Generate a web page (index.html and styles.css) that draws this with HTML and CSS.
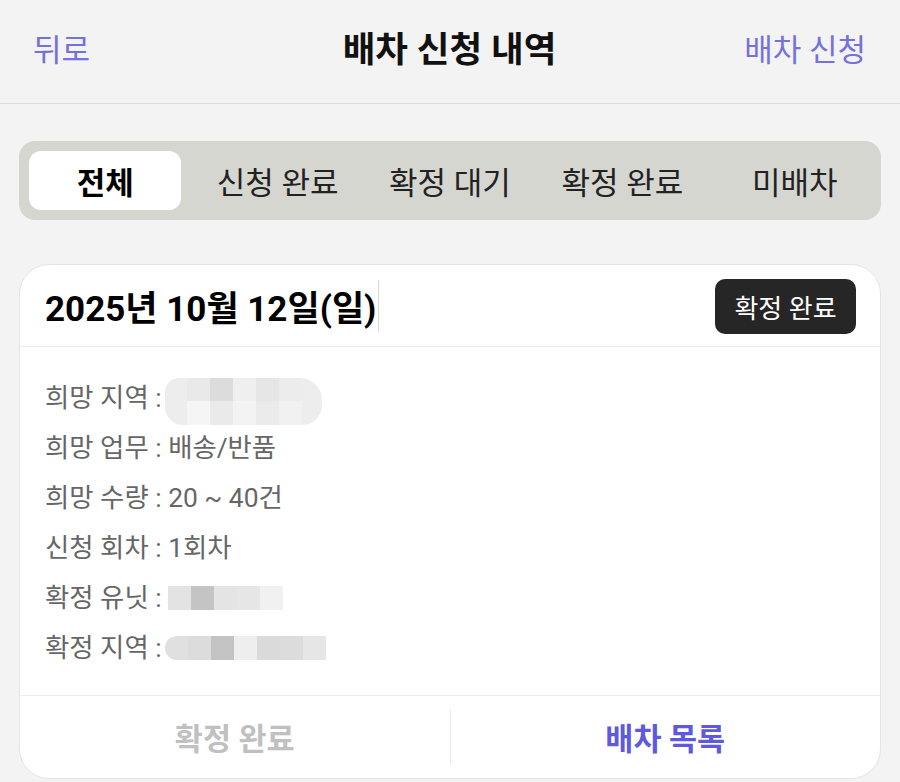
FILE: index.html
```html
<!DOCTYPE html>
<html lang="ko">
<head>
<meta charset="utf-8">
<title>배차 신청 내역</title>
<link rel="stylesheet" href="styles.css">
</head>
<body>
<header class="topbar">
  <a class="nav-link">뒤로</a>
  <h1 class="title">배차 신청 내역</h1>
  <a class="nav-link right">배차 신청</a>
</header>

<main class="content">
  <nav class="tabs">
    <div class="tab"><span class="tab-pill active">전체</span></div>
    <div class="tab"><span class="tab-pill">신청 완료</span></div>
    <div class="tab"><span class="tab-pill">확정 대기</span></div>
    <div class="tab"><span class="tab-pill">확정 완료</span></div>
    <div class="tab"><span class="tab-pill">미배차</span></div>
  </nav>

  <section class="card">
    <div class="card-head">
      <div class="date">2025년 10월 12일(일)<span class="caret"></span></div>
      <span class="badge">확정 완료</span>
    </div>
    <div class="card-body">
      <div class="row">희망 지역 : <span class="mosaic m1"><i class="c1"></i><i class="c2"></i><i class="c3"></i><i class="c4"></i><i class="c5"></i><i class="c6"></i><i class="c7"></i><i class="c8"></i><i class="c9"></i><i class="c10"></i></span></div>
      <div class="row">희망 업무 : 배송/반품</div>
      <div class="row">희망 수량 : 20 ~ 40건</div>
      <div class="row">신청 회차 : 1회차</div>
      <div class="row">확정 유닛 : <span class="mosaic m2"><i class="d1"></i><i class="d2"></i><i class="d3"></i><i class="d4"></i><i class="d5"></i></span></div>
      <div class="row">확정 지역 : <span class="mosaic m3"><i class="e1"></i><i class="e2"></i><i class="e3"></i><i class="e4"></i><i class="e5"></i><i class="e6"></i><i class="e7"></i></span></div>
    </div>
    <div class="card-foot">
      <button class="foot-btn disabled">확정 완료</button>
      <span class="foot-divider"></span>
      <button class="foot-btn primary">배차 목록</button>
    </div>
  </section>
</main>
</body>
</html>
```

FILE: styles.css
```css
* { box-sizing: border-box; }

html, body {
  margin: 0;
  padding: 0;
  background: #f3f3f3;
  font-family: Roboto, "Noto Sans CJK KR", sans-serif;
  color: #111;
}

.topbar {
  height: 104px;
  display: grid;
  grid-template-columns: 1fr auto 1fr;
  align-items: center;
  padding: 0 34px 2px 33px;
  border-bottom: 1px solid #dcdcdc;
}

.nav-link {
  font-size: 31px;
  color: #7571d8;
  line-height: 1;
}

.nav-link.right { justify-self: end; }

.title {
  margin: 0;
  font-size: 35.5px;
  font-weight: 700;
  line-height: 1;
  color: #111;
}

.content {
  padding: 37px 19px 0 19px;
}

.tabs {
  display: grid;
  grid-template-columns: repeat(5, 1fr);
  height: 79px;
  background: #d6d6d0;
  border-radius: 16px;
}

.tab {
  padding: 10px;
  display: flex;
}

.tab-pill {
  flex: 1;
  display: flex;
  align-items: center;
  justify-content: center;
  border-radius: 12px;
  font-size: 31px;
  color: #222;
}

.tab-pill.active {
  background: #fff;
  font-weight: 700;
  color: #000;
}

.card {
  margin-top: 44px;
  background: #fff;
  border: 1px solid #e4e4e4;
  border-radius: 30px;
  overflow: hidden;
}

.card-head {
  height: 82px;
  display: flex;
  align-items: center;
  justify-content: space-between;
  padding: 0 24px 0 25px;
  border-bottom: 1px solid #ececec;
}

.date {
  font-size: 35px;
  font-weight: 700;
  color: #000;
  display: flex;
  align-items: center;
}

.caret {
  display: inline-block;
  width: 1px;
  height: 52px;
  background: #d8d8d8;
  margin-left: 2px;
}

.badge {
  width: 141px;
  height: 55px;
  margin-top: 2px;
  display: flex;
  align-items: center;
  justify-content: center;
  background: #262626;
  color: #fff;
  border-radius: 10px;
  font-size: 26px;
}

.card-body {
  padding: 26px 25px 22px;
  border-bottom: 1px solid #ececec;
}

.row {
  height: 50px;
  line-height: 50px;
  font-size: 26.4px;
  color: #666;
  display: flex;
  align-items: center;
  white-space: pre;
}

.mosaic {
  display: inline-grid;
  margin-left: -3px;
}

.mosaic i { display: block; }

.m1 {
  grid-template-columns: 22px repeat(5, 23px) 20px;
  grid-template-rows: 23px 24px;
  margin-top: 6px;
  background: #ededed;
  border-radius: 14px 22px 20px 18px;
  overflow: hidden;
}
.m1 .c1 { grid-column: 2; grid-row: 1; background: #e9e9e9; }
.m1 .c2 { grid-column: 3; grid-row: 1; background: #dcdcdc; }
.m1 .c3 { grid-column: 4; grid-row: 1; background: #efefef; }
.m1 .c4 { grid-column: 5; grid-row: 1; background: #e6e6e6; }
.m1 .c5 { grid-column: 6; grid-row: 1; background: #ececec; }
.m1 .c6 { grid-column: 2; grid-row: 2; background: #f5f5f5; }
.m1 .c7 { grid-column: 3; grid-row: 2; background: #eaeaea; }
.m1 .c8 { grid-column: 4; grid-row: 2; background: #f3f3f3; }
.m1 .c9 { grid-column: 5; grid-row: 2; background: #ebebeb; }
.m1 .c10 { grid-column: 6; grid-row: 2; background: #f1f1f1; }

.m2 {
  grid-template-columns: repeat(5, 23px);
  grid-template-rows: 24px;
  margin-left: 0;
}
.m2 .d1 { background: #e3e3e3; }
.m2 .d2 { background: #c4c4c4; }
.m2 .d3 { background: #e4e4e4; }
.m2 .d4 { background: #e6e6e6; }
.m2 .d5 { background: #f1f1f1; }

.m3 {
  grid-template-columns: repeat(7, 23px);
  grid-template-rows: 24px;
  border-radius: 12px 0 0 12px;
  overflow: hidden;
}
.m3 .e1 { background: #e0e0e0; }
.m3 .e2 { background: #dcdcdc; }
.m3 .e3 { background: #c3c3c3; }
.m3 .e4 { background: #eeeeee; }
.m3 .e5 { background: #dadada; }
.m3 .e6 { background: #dcdcdc; }
.m3 .e7 { background: #e6e6e6; }

.card-foot {
  height: 82px;
  display: flex;
  align-items: center;
}

.foot-btn {
  flex: 1;
  height: 100%;
  border: 0;
  background: transparent;
  font-family: inherit;
  font-size: 30.5px;
  font-weight: 700;
  padding: 0;
}

.foot-btn.disabled { color: #c0c0c0; }
.foot-btn.primary { color: #5e59df; }

.foot-divider {
  width: 1px;
  height: 54px;
  background: #e8e8e8;
}
```
